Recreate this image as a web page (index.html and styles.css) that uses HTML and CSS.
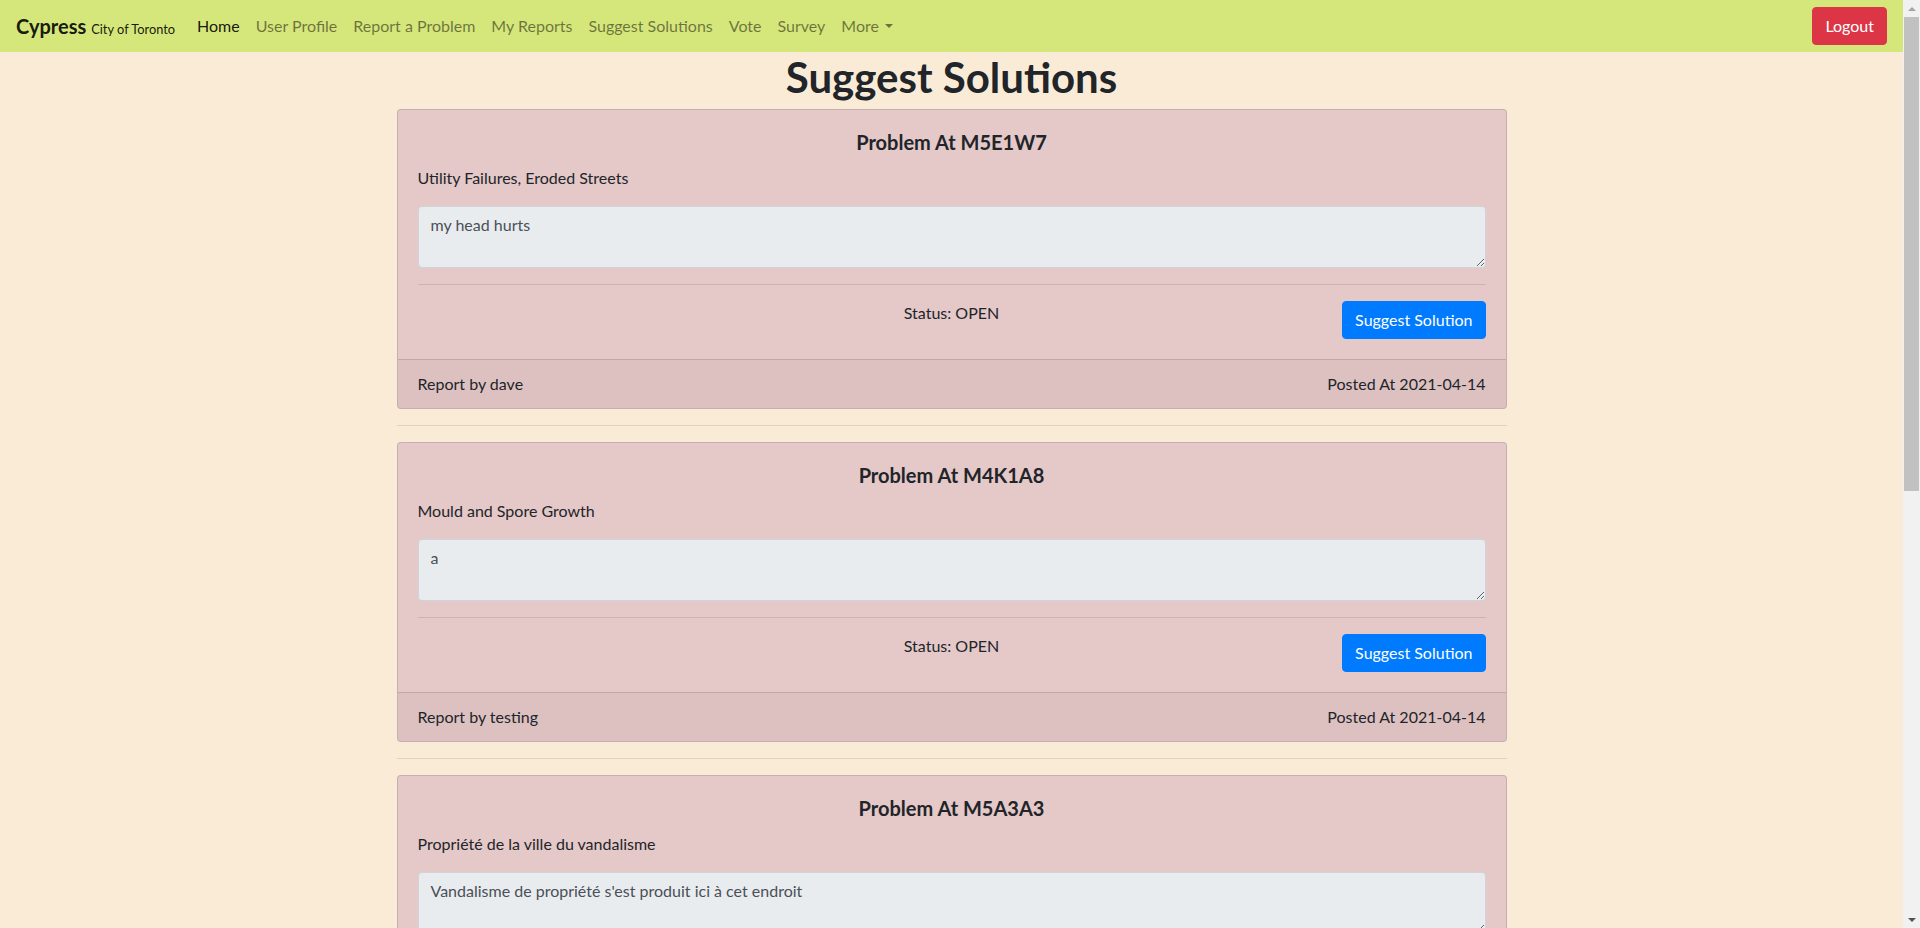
FILE: index.html
```html
<!DOCTYPE html>
<html lang="en">
<head>
<meta charset="utf-8">
<title>Suggest Solutions - Cypress</title>
<link rel="stylesheet" href="styles.css">
</head>
<body>
<div class="page">
<nav class="navbar">
  <a class="brand" href="#"><span class="brand-name">Cypress</span> <small class="brand-sub">City of Toronto</small></a>
  <ul class="nav-list">
    <li><a class="nav-link active" href="#">Home</a></li>
    <li><a class="nav-link" href="#">User Profile</a></li>
    <li><a class="nav-link" href="#">Report a Problem</a></li>
    <li><a class="nav-link" href="#">My Reports</a></li>
    <li><a class="nav-link" href="#">Suggest Solutions</a></li>
    <li><a class="nav-link" href="#">Vote</a></li>
    <li><a class="nav-link" href="#">Survey</a></li>
    <li><a class="nav-link dropdown-toggle" href="#">More</a></li>
  </ul>
  <button class="btn btn-danger" type="button">Logout</button>
</nav>

<main class="container">
  <h1 class="page-title">Suggest Solutions</h1>

  <div class="card">
    <div class="card-body">
      <h5 class="card-title">Problem At M5E1W7</h5>
      <p class="card-text">Utility Failures, Eroded Streets</p>
      <textarea class="form-control" rows="2" readonly>my head hurts</textarea>
      <hr class="inner-rule">
      <div class="status-row">
        <div></div>
        <div class="status">Status: OPEN</div>
        <div class="action"><button class="btn btn-primary" type="button">Suggest Solution</button></div>
      </div>
    </div>
    <div class="card-footer">
      <span>Report by dave</span>
      <span>Posted At 2021-04-14</span>
    </div>
  </div>
  <hr class="divider">

  <div class="card">
    <div class="card-body">
      <h5 class="card-title">Problem At M4K1A8</h5>
      <p class="card-text">Mould and Spore Growth</p>
      <textarea class="form-control" rows="2" readonly>a</textarea>
      <hr class="inner-rule">
      <div class="status-row">
        <div></div>
        <div class="status">Status: OPEN</div>
        <div class="action"><button class="btn btn-primary" type="button">Suggest Solution</button></div>
      </div>
    </div>
    <div class="card-footer">
      <span>Report by testing</span>
      <span>Posted At 2021-04-14</span>
    </div>
  </div>
  <hr class="divider">

  <div class="card">
    <div class="card-body">
      <h5 class="card-title">Problem At M5A3A3</h5>
      <p class="card-text">Propriété de la ville du vandalisme</p>
      <textarea class="form-control" rows="2" readonly>Vandalisme de propriété s'est produit ici à cet endroit</textarea>
      <hr class="inner-rule">
      <div class="status-row">
        <div></div>
        <div class="status">Status: OPEN</div>
        <div class="action"><button class="btn btn-primary" type="button">Suggest Solution</button></div>
      </div>
    </div>
    <div class="card-footer">
      <span>Report by testing</span>
      <span>Posted At 2021-04-14</span>
    </div>
  </div>
  <hr class="divider">

  <div class="card">
    <div class="card-body">
      <h5 class="card-title">Problem At M6G2L7</h5>
      <p class="card-text">Potholes</p>
      <textarea class="form-control" rows="2" readonly>large pothole near the intersection</textarea>
      <hr class="inner-rule">
      <div class="status-row">
        <div></div>
        <div class="status">Status: OPEN</div>
        <div class="action"><button class="btn btn-primary" type="button">Suggest Solution</button></div>
      </div>
    </div>
    <div class="card-footer">
      <span>Report by dave</span>
      <span>Posted At 2021-04-13</span>
    </div>
  </div>
  <hr class="divider">

  <div class="card">
    <div class="card-body">
      <h5 class="card-title">Problem At M4C1B5</h5>
      <p class="card-text">Broken Streetlights</p>
      <textarea class="form-control" rows="2" readonly>the light on my street has been out for a week</textarea>
      <hr class="inner-rule">
      <div class="status-row">
        <div></div>
        <div class="status">Status: OPEN</div>
        <div class="action"><button class="btn btn-primary" type="button">Suggest Solution</button></div>
      </div>
    </div>
    <div class="card-footer">
      <span>Report by testing</span>
      <span>Posted At 2021-04-12</span>
    </div>
  </div>
  <hr class="divider">
</main>
</div>

<div class="scrollbar" aria-hidden="true">
  <span class="scroll-arrow up"></span>
  <span class="scroll-thumb"></span>
  <span class="scroll-arrow down"></span>
</div>
</body>
</html>
```

FILE: styles.css
```css
* { box-sizing: border-box; }

html, body {
  margin: 0;
  padding: 0;
}

body {
  background: #faebd7;
  color: #212529;
  font-family: "Lato", "Open Sans", sans-serif;
  font-size: 16px;
  line-height: 1.5;
}

.page {
  margin-right: 17px;
}

a { text-decoration: none; }

.navbar {
  display: flex;
  align-items: center;
  height: 52px;
  padding: 0 16px;
  background: #d5e67a;
}

.brand {
  display: flex;
  align-items: baseline;
  gap: 5px;
  margin-right: 14px;
  color: rgba(0, 0, 0, 0.9);
}

.brand-name {
  font-size: 20px;
  font-weight: 700;
}

.brand-sub {
  font-size: 12.8px;
}

.nav-list {
  display: flex;
  list-style: none;
  margin: 0;
  padding: 0;
  flex: 1;
}

.nav-link {
  display: block;
  padding: 8px;
  color: rgba(0, 0, 0, 0.5);
}

.nav-link.active {
  color: rgba(0, 0, 0, 0.9);
}

.dropdown-toggle::after {
  content: "";
  display: inline-block;
  margin-left: 0.4em;
  vertical-align: 0.255em;
  border-top: 0.3em solid;
  border-right: 0.3em solid transparent;
  border-left: 0.3em solid transparent;
}

.btn {
  font-family: inherit;
  font-size: 16px;
  line-height: 1.5;
  padding: 6px 12px;
  border: 1px solid transparent;
  border-radius: 4px;
  color: #fff;
  cursor: pointer;
}

.btn-danger {
  background: #dc3545;
  border-color: #dc3545;
}

.btn-primary {
  background: #007bff;
  border-color: #007bff;
}

.container {
  width: 1140px;
  margin: 0 auto;
  padding: 0 15px;
}

.page-title {
  margin: 0 0 8px;
  padding-top: 1px;
  text-align: center;
  font-size: 42px;
  font-weight: 700;
  line-height: 48px;
}

.card {
  background: #e5c8c8;
  border: 1px solid rgba(0, 0, 0, 0.125);
  border-radius: 4px;
  overflow: hidden;
}

.card-body {
  padding: 20px;
}

.card-title {
  margin: 0 0 12px;
  text-align: center;
  font-size: 20px;
  font-weight: 700;
  line-height: 1.2;
}

.card-text {
  margin: 0 0 16px;
}

.form-control {
  display: block;
  width: 100%;
  height: 62px;
  padding: 6px 12px;
  font-family: inherit;
  font-size: 16px;
  line-height: 1.5;
  color: #495057;
  background: #e9ecef;
  border: 1px solid #ced4da;
  border-radius: 4px;
}

.inner-rule {
  margin: 16px 0;
  border: 0;
  border-top: 1px solid rgba(0, 0, 0, 0.1);
}

.status-row {
  display: grid;
  grid-template-columns: 1fr 1fr 1fr;
}

.status {
  text-align: center;
}

.action {
  text-align: right;
}

.card-footer {
  display: flex;
  justify-content: space-between;
  padding: 12px 20px;
  background: rgba(0, 0, 0, 0.03);
  border-top: 1px solid rgba(0, 0, 0, 0.125);
}

.divider {
  margin: 16px 0;
  border: 0;
  border-top: 1px solid rgba(0, 0, 0, 0.1);
}

/* Decorative classic scrollbar, drawn over the right edge of the window */
.scrollbar {
  position: fixed;
  top: 0;
  right: 0;
  bottom: 0;
  width: 17px;
  background: #f1f1f1;
  display: flex;
  flex-direction: column;
  align-items: center;
}

.scroll-arrow {
  flex: 0 0 17px;
  width: 17px;
  display: flex;
  align-items: center;
  justify-content: center;
}

.scroll-arrow::before {
  content: "";
  border-left: 4px solid transparent;
  border-right: 4px solid transparent;
}

.scroll-arrow.up::before {
  border-bottom: 4px solid #a3a3a3;
}

.scroll-arrow.down {
  margin-top: auto;
}

.scroll-arrow.down::before {
  border-top: 4px solid #505050;
}

.scroll-thumb {
  width: 15px;
  height: 474px;
  background: #c1c1c1;
}
```
